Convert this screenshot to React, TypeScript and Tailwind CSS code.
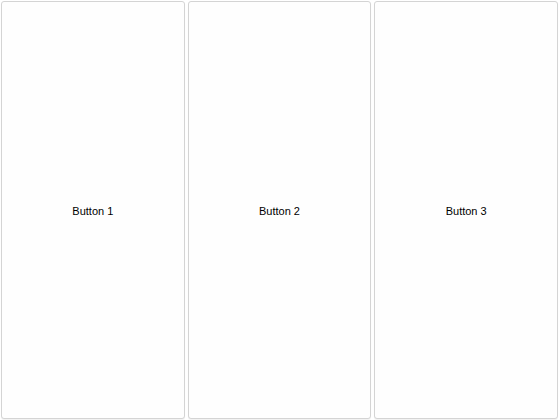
export default function App() {
  const labels = ["Button 1", "Button 2", "Button 3"];

  return (
    <div className="flex h-[420px] w-[560px] gap-[3px] bg-white py-px pl-px pr-[2px] font-['Liberation_Sans',Arial,sans-serif]">
      {labels.map((label) => (
        <button
          key={label}
          className="flex flex-1 items-center justify-center rounded-[3px] border border-[#d4d4d4] bg-[#fefefe] pt-[2px] text-[11px] text-black shadow-[0_1px_1px_rgba(0,0,0,0.06)]"
        >
          {label}
        </button>
      ))}
    </div>
  );
}
